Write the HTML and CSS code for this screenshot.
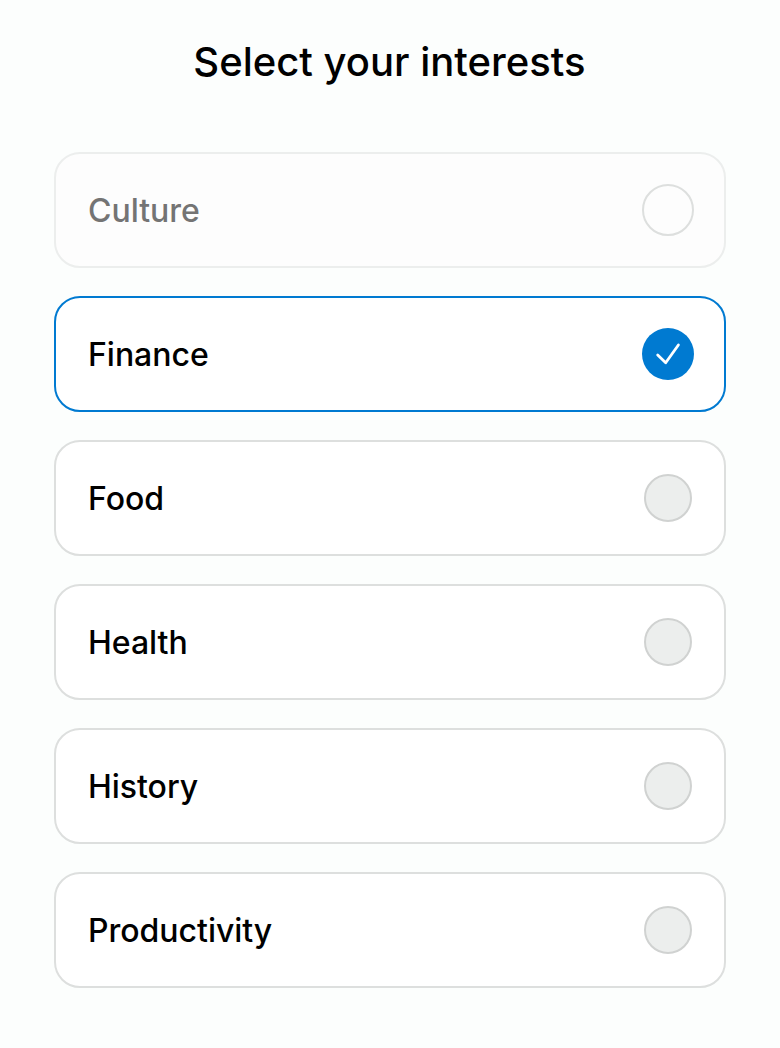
FILE: index.html
```html
<!DOCTYPE html>
<html lang="en">
<head>
<meta charset="utf-8">
<title>Select your interests</title>
<link rel="stylesheet" href="styles.css">
</head>
<body>
<main class="page">
<h1 class="title">Select your interests</h1>
<ul class="options">
<li class="option option-disabled"><span class="label">Culture</span><span class="radio"></span></li>
<li class="option option-selected"><span class="label">Finance</span><span class="radio"><svg width="52" height="52" viewBox="0 0 52 52" fill="none" stroke="#fff" stroke-width="2.8" stroke-linecap="round" stroke-linejoin="round"><path d="M15.7 26.9L23.7 34.7L36.4 17"/></svg></span></li>
<li class="option"><span class="label">Food</span><span class="radio"></span></li>
<li class="option"><span class="label">Health</span><span class="radio"></span></li>
<li class="option"><span class="label">History</span><span class="radio"></span></li>
<li class="option"><span class="label">Productivity</span><span class="radio"></span></li>
</ul>
</main>
</body>
</html>
```
FILE: styles.css
```css
* { box-sizing: border-box; }
body { margin: 0; background: #fcfefd; font-family: Inter, "Liberation Sans", sans-serif; color: #000; }
.page { height: 1048px; padding: 38px 54px 0; }
.title { margin: 0 0 66px; padding-right: 1px; font-size: 40px; line-height: 48px; font-weight: 500; text-align: center; }
.options { list-style: none; margin: 0; padding: 0; display: flex; flex-direction: column; gap: 28px; }
.option { height: 116px; border: 2px solid #dddfde; border-radius: 26px; background: #fff; display: flex; align-items: center; justify-content: space-between; padding: 0 32px; }
.label { padding-top: 2px; font-size: 32px; line-height: 40px; font-weight: 500; letter-spacing: -0.02px; }
.radio { width: 48px; height: 48px; border-radius: 50%; border: 2px solid #d0d2d1; background: #eceeed; }
.option-disabled { background: #fdfdfd; border-color: #eceeed; padding-right: 30px; }
.option-disabled .label { color: #747474; }
.option-disabled .radio { width: 52px; height: 52px; background: #fdfdfd; border-color: #dddfde; }
.option-selected { border-color: #007ad1; padding-right: 30px; }
.option-selected .radio { width: 52px; height: 52px; border: 0; background: #007ad1; }
.radio svg { display: block; }
```
